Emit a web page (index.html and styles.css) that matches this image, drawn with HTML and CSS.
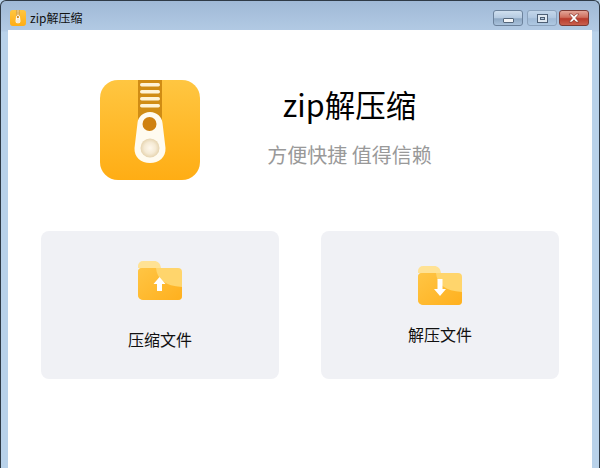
FILE: index.html
```html
<!DOCTYPE html>
<html lang="zh">
<head>
<meta charset="utf-8">
<title>zip解压缩</title>
<link rel="stylesheet" href="styles.css">
</head>
<body>
<div class="window">
  <header class="titlebar">
    <svg class="app-icon" width="16" height="16" viewBox="0 0 100 100">
      <use href="#zip-logo"/>
    </svg>
    <span class="app-name">zip解压缩</span>
    <div class="controls">
      <button class="ctl ctl-min"><span class="min-glyph"></span></button>
      <button class="ctl ctl-max"><span class="max-glyph"></span></button>
      <button class="ctl ctl-close">
        <svg width="14" height="10" viewBox="0 0 14 10"><path d="M2 1h3l2 2.2L9 1h3L8.6 5 12 9H9L7 6.800 5 9H2l3.400-4z" fill="#fff" stroke="#7c2a20" stroke-width=".6"/></svg>
      </button>
    </div>
  </header>
  <main class="content">
    <section class="hero">
      <svg class="logo" width="100" height="100" viewBox="0 0 100 100">
        <defs>
          <linearGradient id="logo-bg" x1="0" y1="0" x2="0" y2="1">
            <stop offset="0" stop-color="#ffc641"/>
            <stop offset="1" stop-color="#ffad14"/>
          </linearGradient>
          <radialGradient id="logo-pull">
            <stop offset="0" stop-color="#fff8ec"/>
            <stop offset=".6" stop-color="#f5ead4"/>
            <stop offset="1" stop-color="#e6d4b0"/>
          </radialGradient>
          <g id="zip-logo">
            <rect width="100" height="100" rx="18" fill="url(#logo-bg)"/>
            <path d="M38 0h24v40H38z" fill="#d08c14"/>
            <g fill="#fff3d6">
              <rect x="40" y="3" width="20" height="3.500" rx="1.700"/>
              <rect x="40" y="10" width="20" height="3.500" rx="1.700"/>
              <rect x="40" y="17" width="20" height="3.500" rx="1.700"/>
              <rect x="40" y="24" width="20" height="3.500" rx="1.700"/>
            </g>
            <path d="M50 32c7 0 12 5 12.500 11L65.500 68c0.500 9-6.500 15-15.500 15s-16-6-15.500-15L37.500 43C38 37 43 32 50 32z" fill="#fffbf0"/>
            <circle cx="49.500" cy="44" r="7" fill="#cf8110"/>
            <circle cx="50" cy="68" r="9.500" fill="url(#logo-pull)"/>
          </g>
          <linearGradient id="folder-front" x1="0" y1="0" x2="1" y2="1">
            <stop offset="0" stop-color="#ffc544"/>
            <stop offset="1" stop-color="#ffb01e"/>
          </linearGradient>
          <g id="folder">
            <path d="M0 6a5 5 0 0 1 5-5h11c4 0 6 2 7 7h-23z" fill="#ffe294"/>
            <path d="M0 12a4 4 0 0 1 4-4h36a4 4 0 0 1 4 4v24a4 4 0 0 1-4 4H5a5 5 0 0 1-5-5z" fill="#ffd56c"/>
            <path d="M0 12a4 4 0 0 1 4-4h14c1 11 9 18 26 19v9a4 4 0 0 1-4 4H5a5 5 0 0 1-5-5z" fill="url(#folder-front)"/>
          </g>
        </defs>
        <use href="#zip-logo"/>
      </svg>
      <div class="hero-text">
        <h1 class="hero-title">zip解压缩</h1>
        <p class="hero-sub">方便快捷 值得信赖</p>
      </div>
    </section>
    <section class="cards">
      <div class="card card-compress">
        <svg width="44" height="40" viewBox="0 0 44 40">
          <use href="#folder"/>
          <path d="M21.500 17l-6 7h3.500v7h5v-7h3.500z" fill="#fff"/>
        </svg>
        <span class="card-label">压缩文件</span>
      </div>
      <div class="card card-extract">
        <svg width="44" height="40" viewBox="0 0 44 40">
          <use href="#folder"/>
          <path d="M19.500 14h5v10h3.500l-6 7-6-7h3.500z" fill="#fff"/>
        </svg>
        <span class="card-label">解压文件</span>
      </div>
    </section>
  </main>
</div>
</body>
</html>
```
FILE: styles.css
```css
* {
  box-sizing: border-box;
}

html,
body {
  margin: 0;
  height: 100%;
}

body {
  font-family: "Noto Sans CJK SC", "Noto Sans", sans-serif;
  background: #b9d2ea;
  overflow: hidden;
}

.window {
  width: 600px;
  height: 468px;
  display: flex;
  flex-direction: column;
  padding: 0 7px;
  border: 1px solid #2f3a46;
  border-bottom: 0;
  border-radius: 6px 6px 0 0;
  background: linear-gradient(to bottom, #a0b9d6 0, #b2cae4 30px, #b9d2ea 31px);
}

.titlebar {
  height: 29px;
  margin: 0 -7px;
  padding: 4px 10px 0 9px;
  display: flex;
  align-items: center;
  flex: none;
}

.app-icon {
  margin-right: 4px;
}

.app-name {
  font-size: 12px;
  color: #111;
  line-height: 16px;
}

.controls {
  margin-left: auto;
  margin-top: 1px;
  display: flex;
  gap: 2px;
}

.ctl {
  width: 30px;
  height: 16px;
  padding: 0;
  display: flex;
  align-items: center;
  justify-content: center;
  border: 1px solid #6c829c;
  border-radius: 3px;
}

.ctl-min {
  margin-right: 2px;
  background: linear-gradient(to bottom, #cfdfef 0, #b4c9e0 50%, #8ea8c4 55%, #a9c2dc 100%);
  align-items: flex-end;
  padding-bottom: 2px;
}

.ctl-max {
  background: linear-gradient(to bottom, #c3d6ea 0, #b0c7e0 50%, #a0bad6 55%, #aec8e2 100%);
  border-color: #8ca3bd;
}

.ctl-close {
  background: linear-gradient(to bottom, #e3a598 0, #cf6e5d 45%, #b83a2b 55%, #c9604f 100%);
  border-color: #7c3a34;
}

.min-glyph {
  width: 11px;
  height: 5px;
  background: #f2f5f8;
  border: 1px solid #55677c;
  border-radius: 1px;
}

.max-glyph {
  width: 11px;
  height: 9px;
  background: #dfe8f1;
  border: 1px solid #4d5f75;
  position: relative;
}

.max-glyph::after {
  content: "";
  position: absolute;
  left: 2px;
  top: 2px;
  width: 3px;
  height: 1px;
  background: #b4c8dd;
  border: 1px solid #4d5f75;
  box-sizing: content-box;
}

.content {
  flex: 1;
  background: #fff;
  display: flex;
  flex-direction: column;
  padding: 50px 33px 0;
}

.hero {
  display: flex;
  height: 100px;
  padding-left: 59px;
}

.logo {
  flex: none;
  display: block;
}

.hero-text {
  flex: 1;
  display: flex;
  flex-direction: column;
  align-items: center;
  padding-right: 60px;
}

.hero-title {
  margin: 1px 0 0;
  font-size: 30.5px;
  line-height: 46px;
  font-weight: 400;
  color: #000;
}

.hero-sub {
  margin: 13px 0 0;
  font-size: 20px;
  line-height: 30px;
  color: #999;
}

.cards {
  margin-top: 51px;
  display: flex;
  gap: 42px;
}

.card {
  width: 238px;
  height: 148px;
  background: #f0f1f5;
  border-radius: 8px;
  display: flex;
  flex-direction: column;
  align-items: center;
}

.card svg {
  display: block;
}

.card-label {
  font-size: 16px;
  line-height: 24px;
  color: #111;
}

.card-compress {
  padding-top: 29px;
}

.card-compress .card-label {
  margin-top: 27px;
}

.card-extract {
  padding-top: 34px;
}

.card-extract .card-label {
  margin-top: 17px;
}
```
